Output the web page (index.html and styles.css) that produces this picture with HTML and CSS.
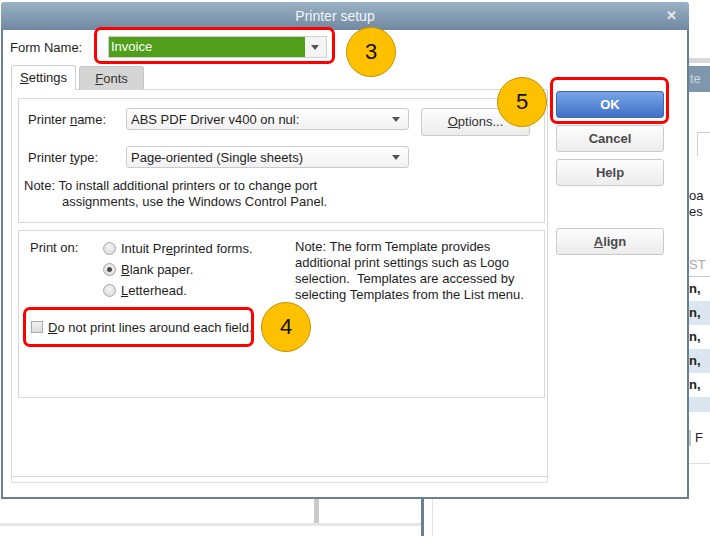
FILE: index.html
```html
<!DOCTYPE html>
<html lang="en">
  <head>
    <meta charset="UTF-8" />
    <meta name="viewport" content="width=device-width, initial-scale=1.0" />
    <link rel="stylesheet" href="styles.css">
    <title>Printer setup</title>
  </head>
  <body>
    <div class="desktop">
      <!-- bits of the window behind the dialog -->
      <div class="under-col"></div>
      <div class="under-line"></div>
      <div class="under-edge"></div>
      <div class="under-edge2"></div>

      <div class="backwin">
        <div class="bw-bar"></div>
        <div class="bw-head">te</div>
        <div class="bw-tab"></div>
        <div class="bw-text">oa<br />es</div>
        <div class="bw-st">ST</div>
        <div class="bw-rows">
          <div class="bw-row">n,</div>
          <div class="bw-row alt">n,</div>
          <div class="bw-row">n,</div>
          <div class="bw-row alt">n,</div>
          <div class="bw-row">n,</div>
          <div class="bw-row alt short"></div>
        </div>
        <div class="bw-f">F</div>
        <div class="bw-rule"></div>
      </div>

      <div class="dialog">
        <div class="titlebar">
          <span class="title">Printer setup</span>
          <span class="close">&#x2715;</span>
        </div>

        <div class="dialog-body">
          <div class="left">
            <div class="form-row">
              <span class="form-label">Form Name:</span>
              <div class="combo">
                <span class="combo-value">Invoice</span>
                <span class="arrow"></span>
              </div>
            </div>

            <div class="tabs">
              <div class="tab active"><u>S</u>ettings</div>
              <div class="tab"><u>F</u>onts</div>
            </div>

            <div class="panel">
              <div class="group group-printer">
                <div class="row">
                  <span class="row-label">Printer <u>n</u>ame:</span>
                  <div class="select">
                    <span>ABS PDF Driver v400 on nul:</span>
                    <span class="arrow"></span>
                  </div>
                  <button class="btn btn-options"><u>O</u>ptions...</button>
                </div>
                <div class="row row-type">
                  <span class="row-label">Printer <u>t</u>ype:</span>
                  <div class="select">
                    <span>Page-oriented (Single sheets)</span>
                    <span class="arrow"></span>
                  </div>
                </div>
                <p class="note">
                  Note: To install additional printers or to change port<br />
                  <span class="indent">assignments, use the Windows Control Panel.</span>
                </p>
              </div>

              <div class="group group-print">
                <div class="print-on">
                  <span class="print-label">Print on:</span>
                  <div class="radios">
                    <label class="radio-row"><span class="radio"></span><span>Intuit Pr<u>e</u>printed forms.</span></label>
                    <label class="radio-row"><span class="radio checked"></span><span><u>B</u>lank paper.</span></label>
                    <label class="radio-row"><span class="radio"></span><span><u>L</u>etterhead.</span></label>
                  </div>
                  <p class="template-note">
                    Note: The form Template provides<br />
                    additional print settings such as Logo<br />
                    selection.&nbsp; Templates are accessed by<br />
                    selecting Templates from the List menu.
                  </p>
                </div>
                <label class="check-row"><span class="checkbox"></span><span><u>D</u>o not print lines around each field.</span></label>
              </div>
            </div>
            <div class="panel-foot"></div>
          </div>

          <div class="buttons">
            <button class="btn btn-ok">OK</button>
            <button class="btn">Cancel</button>
            <button class="btn">Help</button>
            <button class="btn btn-align"><u>A</u>lign</button>
          </div>
        </div>
      </div>

      <!-- tutorial callouts -->
      <div class="callout-box box-3"></div>
      <div class="badge badge-3">3</div>
      <div class="callout-box box-5"></div>
      <div class="badge badge-5">5</div>
      <div class="callout-box box-4"></div>
      <div class="badge badge-4">4</div>
    </div>
  </body>
</html>
```

FILE: styles.css
```css
body {
  margin: 0;
  background: #fff;
  font-family: "Liberation Sans", Arial, sans-serif;
  font-size: 13px;
  color: #1e1e1e;
}

.desktop {
  position: relative;
  width: 710px;
  height: 536px;
  overflow: hidden;
}

/* behind the dialog */
.under-col {
  position: absolute;
  left: 314px;
  top: 499px;
  width: 5px;
  height: 27px;
  background: #c9c9c9;
}
.under-line {
  position: absolute;
  left: 0;
  top: 523px;
  width: 421px;
  height: 3px;
  background: #e6e6e6;
}
.under-edge {
  position: absolute;
  left: 421px;
  top: 499px;
  width: 3px;
  height: 37px;
  background: #687f94;
}
.under-edge2 {
  position: absolute;
  left: 432px;
  top: 499px;
  width: 1px;
  height: 37px;
  background: #e2e2e2;
}

.backwin {
  position: absolute;
  left: 689px;
  top: 58px;
  width: 21px;
  height: 420px;
  font-size: 13px;
  color: #222;
}
.bw-bar {
  height: 5px;
  background: #d9d9d9;
  margin-bottom: 3px;
}
.bw-head {
  height: 26px;
  line-height: 26px;
  background: #7f97ad;
  color: #c9d5df;
  padding-left: 1px;
}
.bw-tab {
  margin: 40px 0 0 8px;
  height: 23px;
  border-left: 1px solid #cfcfcf;
  border-top: 1px solid #cfcfcf;
}
.bw-text {
  margin-top: 32px;
  line-height: 16px;
}
.bw-st {
  margin-top: 37px;
  color: #a8a8a8;
  line-height: 16px;
  padding-bottom: 3px;
  border-bottom: 1px solid #c8c8c8;
}
.bw-row {
  height: 24px;
  line-height: 24px;
  font-weight: bold;
}
.bw-row.alt {
  background: #dce6f1;
}
.bw-row.short {
  height: 15px;
}
.bw-f {
  margin-top: 18px;
  line-height: 16px;
  padding-left: 4px;
  border-left: 2px solid #c8c8c8;
}
.bw-rule {
  margin-top: 17px;
  border-top: 1px solid #e0e0e0;
}

/* dialog window */
.dialog {
  position: absolute;
  left: 1px;
  top: 2px;
  width: 684px;
  height: 495px;
  background: #fff;
  border: 2px solid #687f94;
  border-top: none;
  border-radius: 4px 4px 0 0;
}

.titlebar {
  position: relative;
  height: 28px;
  margin: 0 -2px;
  border-radius: 4px 4px 0 0;
  background: linear-gradient(#9bb2c6, #7088a0);
  display: flex;
  align-items: center;
  justify-content: center;
  padding-right: 20px;
}
.title {
  color: #f2f5f8;
  font-size: 14px;
}
.close {
  position: absolute;
  right: 12px;
  top: 6px;
  color: #e4eaf0;
  font-size: 13px;
  font-weight: bold;
}

.dialog-body {
  display: flex;
  gap: 8px;
  padding: 6px 0 0 7px;
}

.left {
  width: 538px;
}

.form-row {
  display: flex;
  align-items: center;
  height: 22px;
}
.form-label {
  width: 98px;
}
.combo {
  width: 217px;
  height: 20px;
  border: 1px solid #d0d0d0;
  background: #f4f4f4;
  display: flex;
  align-items: center;
}
.combo-value {
  width: 194px;
  height: 20px;
  line-height: 20px;
  padding-left: 2px;
  background: #4f9f1a;
  color: #fff;
}
.combo .arrow {
  margin-left: 6px;
}

.arrow {
  width: 0;
  height: 0;
  border-left: 4px solid transparent;
  border-right: 4px solid transparent;
  border-top: 5px solid #555;
}

.tabs {
  display: flex;
  align-items: flex-end;
  gap: 3px;
  margin-top: 7px;
  padding-left: 1px;
  position: relative;
  z-index: 1;
}
.tab {
  width: 63px;
  height: 21px;
  padding-top: 2px;
  text-align: center;
  background: #d5d5d5;
  border: 1px solid #c6c6c6;
  border-bottom: none;
  border-radius: 3px 3px 0 0;
  color: #333;
}
.tab.active {
  height: 24px;
  padding-top: 0;
  line-height: 24px;
  background: #fff;
  border-color: #cfcfcf;
  color: #1e1e1e;
}
.tab:not(.active) {
  line-height: 19px;
}

.panel {
  margin: -1px 0 0 1px;
  width: 528px;
  height: 378px;
  border: 1px solid #d8d8d8;
  padding: 8px 2px 0 5px;
}
.panel-foot {
  margin-left: 1px;
  width: 535px;
  height: 5px;
  border: 1px solid #e0e0e0;
  border-top: none;
}

.group {
  border: 1px solid #d8d8d8;
}
.group-printer {
  height: 114px;
  padding: 9px 0 0 9px;
  margin-left: 1px;
}
.group-print {
  height: 159px;
  margin: 7px 0 0 1px;
  padding: 7px 0 0 11px;
}

.row {
  display: flex;
  align-items: center;
  height: 22px;
}
.row-type {
  margin-top: 16px;
}
.row-label {
  width: 98px;
}
.select {
  width: 269px;
  height: 20px;
  padding: 0 8px 0 4px;
  border: 1px solid #cbcbcb;
  border-radius: 3px;
  background: linear-gradient(#fff, #f1f1f1);
  display: flex;
  align-items: center;
  justify-content: space-between;
}

.note {
  margin: 10px 0 0 -4px;
  line-height: 16px;
}
.indent {
  padding-left: 38px;
}

.btn {
  font-family: "Liberation Sans", Arial, sans-serif;
  font-size: 13px;
  font-weight: bold;
  color: #4a4a4a;
  height: 27px;
  border: 1px solid #cacaca;
  border-radius: 3px;
  background: linear-gradient(#fdfdfd, #ececec);
  padding: 0;
}
.btn-options {
  width: 109px;
  height: 28px;
  margin-left: 12px;
  margin-top: 5px;
  font-weight: normal;
  color: #333;
}

.print-on {
  display: flex;
  align-items: flex-start;
}
.print-label {
  width: 73px;
  line-height: 19px;
}
.radios {
  width: 192px;
  display: flex;
  flex-direction: column;
}
.radio-row {
  display: flex;
  align-items: center;
  gap: 5px;
  height: 21px;
}
.radio {
  width: 11px;
  height: 11px;
  border: 1px solid #a8a8a8;
  border-radius: 50%;
  background: radial-gradient(circle at 50% 40%, #f6f6f6, #d4d4d4);
  position: relative;
}
.radio.checked::after {
  content: "";
  position: absolute;
  left: 3px;
  top: 3px;
  width: 5px;
  height: 5px;
  border-radius: 50%;
  background: #4a4a4a;
}
.template-note {
  margin: 1px 0 0;
  line-height: 16px;
}

.check-row {
  display: flex;
  align-items: center;
  gap: 5px;
  margin: 16px 0 0 1px;
  height: 16px;
}
.checkbox {
  width: 10px;
  height: 10px;
  border: 1px solid #a9a9a9;
  background: linear-gradient(#f0f0f0, #dcdcdc);
}

.buttons {
  display: flex;
  flex-direction: column;
  gap: 7px;
  width: 108px;
  padding-top: 55px;
}
.btn-ok {
  color: #fff;
  border-color: #3e67b4;
  background: linear-gradient(#79a6e6, #3f70c9);
}
.btn-align {
  margin-top: 35px;
}

/* callouts drawn over the screenshot */
.callout-box {
  position: absolute;
  border: 3px solid #ff0000;
  border-radius: 7px;
  box-sizing: border-box;
}
.box-3 {
  left: 94px;
  top: 27px;
  width: 241px;
  height: 37px;
}
.box-5 {
  left: 550px;
  top: 77px;
  width: 119px;
  height: 47px;
}
.box-4 {
  left: 23px;
  top: 307px;
  width: 231px;
  height: 40px;
}
.badge {
  position: absolute;
  width: 48px;
  height: 48px;
  border: 1px solid #c39300;
  border-radius: 50%;
  background: #ffc000;
  color: #111;
  font-size: 22px;
  line-height: 48px;
  text-align: center;
}
.badge-3 {
  left: 346px;
  top: 27px;
}
.badge-5 {
  left: 497px;
  top: 77px;
}
.badge-4 {
  left: 261px;
  top: 302px;
}
```
